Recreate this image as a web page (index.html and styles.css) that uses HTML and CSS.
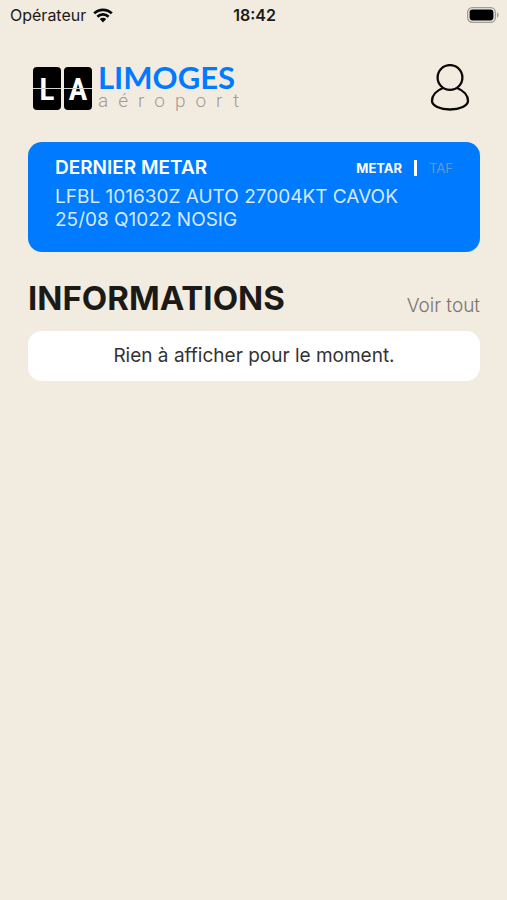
FILE: index.html
```html
<!DOCTYPE html>
<html lang="fr">
<head>
<meta charset="utf-8">
<meta name="viewport" content="width=device-width, initial-scale=1">
<title>Limoges aéroport</title>
<link rel="stylesheet" href="styles.css">
</head>
<body>
<div class="status">
  <div class="carrier">
    <span>Opérateur</span>
    <svg class="wifi" viewBox="0 0 20 15" aria-hidden="true">
      <path d="M1.2 5.400a12.600 12.600 0 0 1 17.600 0M4.400 8.700a8 8 0 0 1 11.200 0" fill="none" stroke="#080808" stroke-width="2.7"/>
      <path d="M6.800 11.100a4.600 4.600 0 0 1 6.400 0L10 14.400z" fill="#080808"/>
    </svg>
  </div>
  <time class="clock">18:42</time>
  <svg class="battery" viewBox="0 0 32 16" aria-hidden="true">
    <rect x=".7" y=".7" width="27.6" height="14.6" rx="4.6" fill="none" stroke="#a09c94" stroke-width="1.3"/>
    <rect x="2.6" y="2.6" width="23.8" height="10.8" rx="2.8" fill="#000"/>
    <path d="M30 5.300c2 .8 2 4.600 0 5.400z" fill="#a09c94"/>
  </svg>
</div>
<header class="header">
  <a class="logo" href="#">
    <span class="tiles"><span class="tile">L</span><span class="tile">A</span></span>
    <span class="brand"><span class="city">LIMOGES</span><span class="airport">aéroport</span></span>
  </a>
  <button class="profile" type="button" aria-label="Profil">
    <svg viewBox="0 0 40 48" aria-hidden="true">
      <g fill="none" stroke="#0b0a08" stroke-width="2.3">
        <circle cx="20" cy="13.500" r="12.4"/>
        <path d="M13 24C6.500 26.500 2 31.500 2 37C2 41.500 10 45.500 20 45.500S38 41.500 38 37C38 31.500 33.500 26.500 27 24"/>
      </g>
    </svg>
  </button>
</header>
<main class="content">
  <section class="metar">
    <div class="metar-head">
      <h2 class="metar-title">DERNIER METAR</h2>
      <div class="tabs">
        <button class="tab active" type="button">METAR</button>
        <span class="divider"></span>
        <button class="tab" type="button">TAF</button>
      </div>
    </div>
    <p class="report">LFBL 101630Z AUTO 27004KT CAVOK 25/08 Q1022 NOSIG</p>
  </section>
  <section>
    <div class="section-head">
      <h1 class="section-title">INFORMATIONS</h1>
      <a class="more" href="#">Voir tout</a>
    </div>
    <p class="empty">Rien à afficher pour le moment.</p>
  </section>
</main>
</body>
</html>
```
FILE: styles.css
```css
* { box-sizing: border-box; }
body {
  margin: 0;
  min-height: 100vh;
  background: #f2ebe0;
  color: #1c1a17;
  font-family: Inter, "Liberation Sans", sans-serif;
}
h1, h2, p { margin: 0; }
a { color: inherit; text-decoration: none; }
button { padding: 0; border: 0; background: none; color: inherit; font: inherit; }
svg { display: block; }

.status {
  display: grid;
  grid-template-columns: 1fr auto 1fr;
  align-items: center;
  height: 30px;
  padding: 0 8px 0 10px;
  font-size: 16px;
}
.carrier { display: flex; align-items: center; gap: 7px; }
.wifi { width: 20px; height: 15px; }
.clock { font-weight: 600; }
.battery { width: 32px; height: 16px; justify-self: end; }

.header {
  display: flex;
  align-items: center;
  justify-content: space-between;
  padding: 34px 37px 0 33px;
}
.logo { display: flex; align-items: center; gap: 6px; }
.tiles { display: flex; gap: 3px; }
.tile {
  position: relative;
  width: 28px;
  height: 43px;
  border-radius: 4px;
  background: #000;
  color: #fff;
  font: 600 32px/44px "Roboto Condensed", Roboto, sans-serif;
  text-align: center;
}
.tile::after {
  content: "";
  position: absolute;
  top: 21px;
  left: 0;
  width: 100%;
  height: 1px;
  background: #d5d2cc;
}
.brand { display: flex; flex-direction: column; }
.city {
  color: #007aff;
  font: 700 31px/26px Lato, sans-serif;
}
.airport {
  color: #a09c92;
  font: 300 19px/22px Roboto, sans-serif;
  letter-spacing: 10px;
}
.profile { width: 40px; height: 48px; }

.content {
  display: flex;
  flex-direction: column;
  gap: 28px;
  padding: 30px 27px 0 28px;
}
.metar {
  min-height: 110px;
  padding: 14px 27px 20px;
  border-radius: 14px;
  background: #007aff;
  color: #fff;
}
.metar-head { display: flex; align-items: center; justify-content: space-between; }
.metar-title { font-size: 19px; line-height: 24px; font-weight: 600; }
.tabs { display: flex; align-items: center; gap: 12px; font-size: 13px; }
.tab { color: #6a98c8; }
.tab.active { color: #fff; font-weight: 700; }
.divider { width: 3px; height: 16px; background: #fff; }
.report {
  margin-top: 5px;
  color: #d6e9ff;
  font-size: 19px;
  line-height: 23px;
}
.section-head { display: flex; align-items: flex-end; justify-content: space-between; }
.section-title { font-size: 33px; line-height: 36px; font-weight: 700; }
.more { color: #79756e; font-size: 19px; line-height: 20px; font-weight: 300; }
.empty {
  margin-top: 15px;
  padding: 13px;
  border-radius: 14px;
  background: #fff;
  color: #333;
  font-size: 19px;
  line-height: 24px;
  text-align: center;
}
```
